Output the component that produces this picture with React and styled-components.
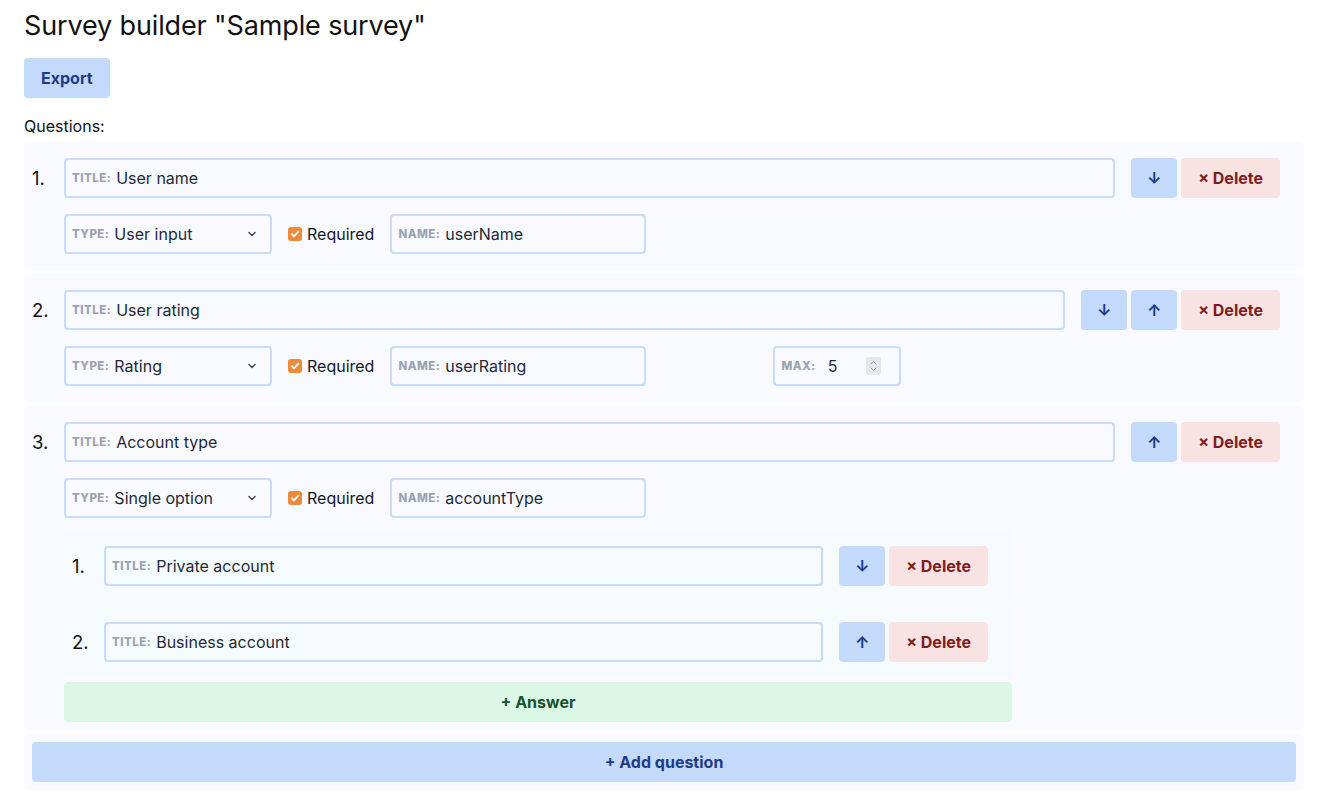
import React from 'react';
import styled, { createGlobalStyle, css } from 'styled-components';

const GlobalStyle = createGlobalStyle`
  body {
    margin: 0;
    font-family: Inter, "Noto Sans", "Liberation Sans", sans-serif;
    color: #111111;
    background: #ffffff;
  }
`;

const Page = styled.div`
  padding: 0 24px;
`;

const Title = styled.h1`
  font-size: 27px;
  font-weight: 400;
  line-height: 36px;
  letter-spacing: -0.005em;
  margin: 8px 0 14px;
`;

const tones = {
  blue: css`
    background: #c3dafa;
    color: #1e3a8a;
  `,
  red: css`
    background: #f9e2e2;
    color: #7f1d1d;
  `,
  green: css`
    background: #dbf7e6;
    color: #14532d;
  `,
};

const Button = styled.button`
  display: flex;
  align-items: center;
  justify-content: center;
  height: 40px;
  padding: 0 17px;
  border: none;
  border-radius: 4px;
  font-family: inherit;
  font-size: 16px;
  font-weight: 700;
  cursor: pointer;
  ${({ tone }) => tones[tone || 'blue']}
  ${({ wide }) => wide && 'width: 100%;'}
  ${({ square }) => square && 'width: 46px; padding: 0;'}
`;

const SectionLabel = styled.div`
  font-size: 16px;
  line-height: 24px;
  margin: 16px 0 4px;
`;

const Card = styled.div`
  background: #f8faff;
  border-radius: 4px;
  padding: ${({ pad }) => pad || '16px 24px 16px 8px'};
  margin-bottom: 4px;
  display: flex;
  flex-direction: column;
  gap: 16px;
`;

const Row = styled.div`
  display: flex;
  align-items: center;
`;

const Options = styled.div`
  display: flex;
  align-items: center;
  gap: 16px;
  padding-left: 32px;
`;

const Number = styled.div`
  width: 32px;
  font-size: 18.5px;
  flex-shrink: 0;
`;

const Field = styled.div`
  display: flex;
  align-items: center;
  box-sizing: border-box;
  height: 40px;
  padding: 0 6px;
  border: 2px solid #c6dcfa;
  border-radius: 4px;
  font-size: 16px;
  color: #1f2937;
  ${({ grow }) => grow && 'flex: 1;'}
  ${({ width }) => width && `width: ${width}px;`}
  ${({ push }) => push && `margin-left: ${push}px;`}
`;

const FieldLabel = styled.span`
  font-size: 11.5px;
  font-weight: 800;
  letter-spacing: 0.04em;
  text-transform: uppercase;
  color: #9ca3af;
  margin-right: ${({ gap }) => gap || 5}px;
`;

const Value = styled.span`
  flex: 1;
`;

const Chevron = styled.svg`
  width: 12px;
  height: 12px;
  margin-right: 6px;
  color: #374151;
`;

const Spinner = styled.span`
  display: flex;
  flex-direction: column;
  align-items: center;
  justify-content: center;
  width: 15px;
  height: 18px;
  margin-right: 12px;
  background: #e5e7eb;
  border-radius: 2px;
`;

const CheckLabel = styled.label`
  display: flex;
  align-items: center;
  gap: 5px;
  font-size: 16px;
  color: #111827;
`;

const Box = styled.span`
  display: flex;
  align-items: center;
  justify-content: center;
  width: 14px;
  height: 14px;
  border-radius: 3px;
  background: #ec8a3b;
`;

const Actions = styled.div`
  display: flex;
  gap: 4px;
  margin-left: 16px;
`;

const AnswerList = styled.div`
  display: flex;
  flex-direction: column;
  gap: 4px;
  width: 948px;
  margin: -4px 0 -8px 32px;
`;

const AnswerCard = styled.div`
  display: flex;
  align-items: center;
  background: #f5fbfc;
  padding: 16px 24px 16px 8px;
`;

const Check = () => (
  <Box>
    <svg width="10" height="10" viewBox="0 0 10 10" fill="none">
      <path d="M1.8 5.2 4 7.3 8.3 2.6" stroke="#fff" strokeWidth="1.8" strokeLinecap="round" strokeLinejoin="round" />
    </svg>
  </Box>
);

const Move = ({ dir }) => (
  <Button tone="blue" square>
    {dir === 'down' ? '↓' : '↑'}
  </Button>
);

const Delete = () => <Button tone="red">× Delete</Button>;

const TitleRow = ({ n, title, down, up }) => (
  <Row>
    <Number>{n}.</Number>
    <Field grow>
      <FieldLabel>Title:</FieldLabel>
      <Value>{title}</Value>
    </Field>
    <Actions>
      {down && <Move dir="down" />}
      {up && <Move dir="up" />}
      <Delete />
    </Actions>
  </Row>
);

const Question = ({ q, children }) => (
  <Card>
    <TitleRow n={q.n} title={q.title} down={q.down} up={q.up} />
    <Options>
      <Field width={208}>
        <FieldLabel>Type:</FieldLabel>
        <Value>{q.type}</Value>
        <Chevron viewBox="0 0 12 12" fill="none">
          <path d="M3 4.5 6 7.5 9 4.5" stroke="currentColor" strokeWidth="1.4" strokeLinecap="round" strokeLinejoin="round" />
        </Chevron>
      </Field>
      <CheckLabel>
        <Check />
        Required
      </CheckLabel>
      <Field width={256}>
        <FieldLabel>Name:</FieldLabel>
        <Value>{q.name}</Value>
      </Field>
      {q.max && (
        <Field width={128} push={111}>
          <FieldLabel gap={12}>Max:</FieldLabel>
          <Value>{q.max}</Value>
          <Spinner>
            <svg width="9" height="14" viewBox="0 0 9 14" fill="none">
              <path d="M2 5 4.5 2.5 7 5M2 9 4.5 11.5 7 9" stroke="#9ca3af" strokeWidth="1" strokeLinecap="round" strokeLinejoin="round" />
            </svg>
          </Spinner>
        </Field>
      )}
    </Options>
    {children}
  </Card>
);

const questions = [
  { n: 1, title: 'User name', type: 'User input', name: 'userName', down: true },
  { n: 2, title: 'User rating', type: 'Rating', name: 'userRating', max: 5, down: true, up: true },
];

const answers = [
  { n: 1, title: 'Private account', down: true },
  { n: 2, title: 'Business account', up: true },
];

const App = () => (
  <Page>
    <GlobalStyle />
    <Title>Survey builder "Sample survey"</Title>
    <Button tone="blue">Export</Button>
    <SectionLabel>Questions:</SectionLabel>
    {questions.map((q) => (
      <Question key={q.n} q={q} />
    ))}
    <Question q={{ n: 3, title: 'Account type', type: 'Single option', name: 'accountType', up: true }}>
      <AnswerList>
        {answers.map((a) => (
          <AnswerCard key={a.n}>
            <Number>{a.n}.</Number>
            <Field grow>
              <FieldLabel>Title:</FieldLabel>
              <Value>{a.title}</Value>
            </Field>
            <Actions>
              {a.down && <Move dir="down" />}
              {a.up && <Move dir="up" />}
              <Delete />
            </Actions>
          </AnswerCard>
        ))}
        <Button tone="green" wide>+ Answer</Button>
      </AnswerList>
    </Question>
    <Card pad="8px">
      <Button tone="blue" wide>+ Add question</Button>
    </Card>
  </Page>
);

export default App;
